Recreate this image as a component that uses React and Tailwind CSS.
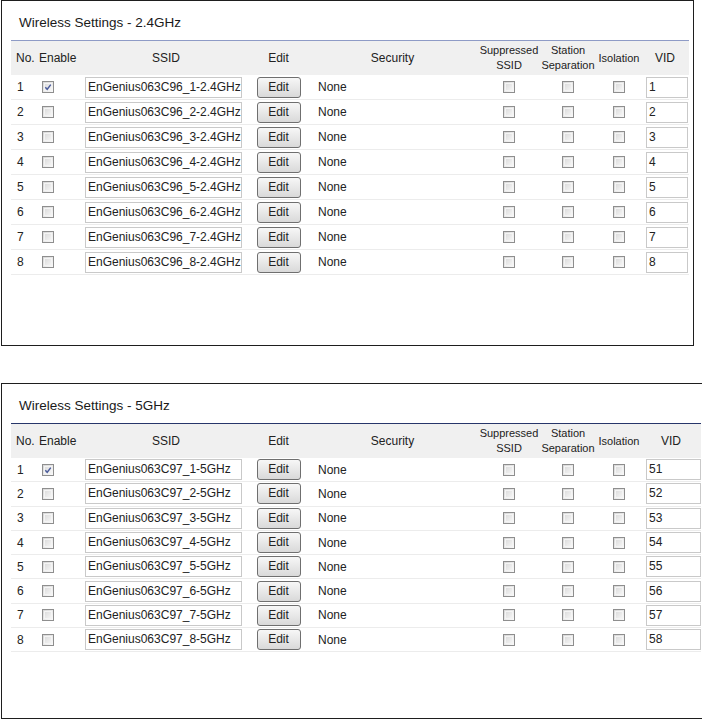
import React from 'react';

const FONT = { fontFamily: '"Liberation Sans", Arial, sans-serif' };

function Box({ checked }) {
  return (
    <span className="relative inline-block w-[12px] h-[12px] border border-[#8e8e8e] bg-gradient-to-br from-[#d6d6d6] to-[#fbfbfb]">
      <span className="absolute inset-[1px] border border-[#f4f4f4]" />
      {checked && (
        <svg viewBox="0 0 10 10" className="absolute inset-0 w-full h-full">
          <path d="M2.3 5.2 L4.2 7.3 L7.8 2.6" fill="none" stroke="#4b5c9c" strokeWidth="1.4" />
        </svg>
      )}
    </span>
  );
}

function Panel({ title, line, rows, rowH, wide }) {
  const cols = wide
    ? 'grid-cols-[26px_44px_170px_55px_173px_60px_58px_44px_60px]'
    : 'grid-cols-[26px_44px_170px_55px_173px_60px_58px_44px_48px]';
  return (
    <div className={`border border-[#1e1e1e] bg-white ${wide ? 'w-[702px] h-[336px]' : 'w-[693px] h-[346px]'}`}>
      <div className="h-[39px] pl-[17px] pt-[14px] text-[13.5px] leading-[16px] text-[#1a1a1a]">{title}</div>
      <div className={`ml-[9px] ${wide ? 'w-[690px]' : 'w-[678px]'} border-t ${line}`}>
        <div className={`grid ${cols} h-[34px] bg-[#f0f0f0] items-center text-[12px] leading-[15px] text-[#222]`}>
          <div className="pl-[5px]">No.</div>
          <div className="pl-[2px]">Enable</div>
          <div className="text-center">SSID</div>
          <div className="text-center">Edit</div>
          <div className="text-center">Security</div>
          <div className="text-center text-[11px] leading-[15px]">Suppressed<br />SSID</div>
          <div className="text-center text-[11px] leading-[15px]">Station<br />Separation</div>
          <div className="text-center text-[11px]">Isolation</div>
          <div className="text-center">VID</div>
        </div>
        {rows.map((r, i) => (
          <div
            key={i}
            className={`grid ${cols} ${rowH} items-center border-b border-[#ececec] text-[12px] text-[#222]`}
          >
            <div className="pl-[6px]">{i + 1}</div>
            <div className="pl-[5px] flex items-center">
              <Box checked={i === 0} />
            </div>
            <div className="pl-[4px]">
              <div className="w-[157px] h-[21px] border border-[#c9c9c9] pl-[2px] leading-[19px] whitespace-nowrap overflow-hidden">
                {r.ssid}
              </div>
            </div>
            <div className="flex justify-center">
              <div className="w-[44px] h-[21px] border border-[#6f6f6f] rounded-[3px] bg-gradient-to-b from-[#f7f7f7] to-[#d9d9d9] text-center leading-[19px]">
                Edit
              </div>
            </div>
            <div className="pl-[12px]">None</div>
            <div className="flex justify-center"><Box /></div>
            <div className="flex justify-center"><Box /></div>
            <div className="flex justify-center"><Box /></div>
            <div className="pl-[5px]">
              <div className={`${wide ? 'w-[55px]' : 'w-[42px]'} h-[21px] border border-[#c9c9c9] pl-[2px] leading-[19px]`}>
                {r.vid}
              </div>
            </div>
          </div>
        ))}
      </div>
    </div>
  );
}

export default function App() {
  const rows24 = [1, 2, 3, 4, 5, 6, 7, 8].map((n) => ({ ssid: `EnGenius063C96_${n}-2.4GHz`, vid: `${n}` }));
  const rows5 = [1, 2, 3, 4, 5, 6, 7, 8].map((n) => ({ ssid: `EnGenius063C97_${n}-5GHz`, vid: `${50 + n}` }));
  return (
    <div className="w-[702px] h-[720px] bg-white overflow-hidden pl-[1px]" style={FONT}>
      <Panel title="Wireless Settings - 2.4GHz" line="border-[#8e9bc6]" rows={rows24} rowH="h-[25px]" />
      <div className="h-[37px]" />
      <Panel title="Wireless Settings - 5GHz" line="border-[#27366a]" rows={rows5} rowH="h-[24.3px]" wide />
    </div>
  );
}
